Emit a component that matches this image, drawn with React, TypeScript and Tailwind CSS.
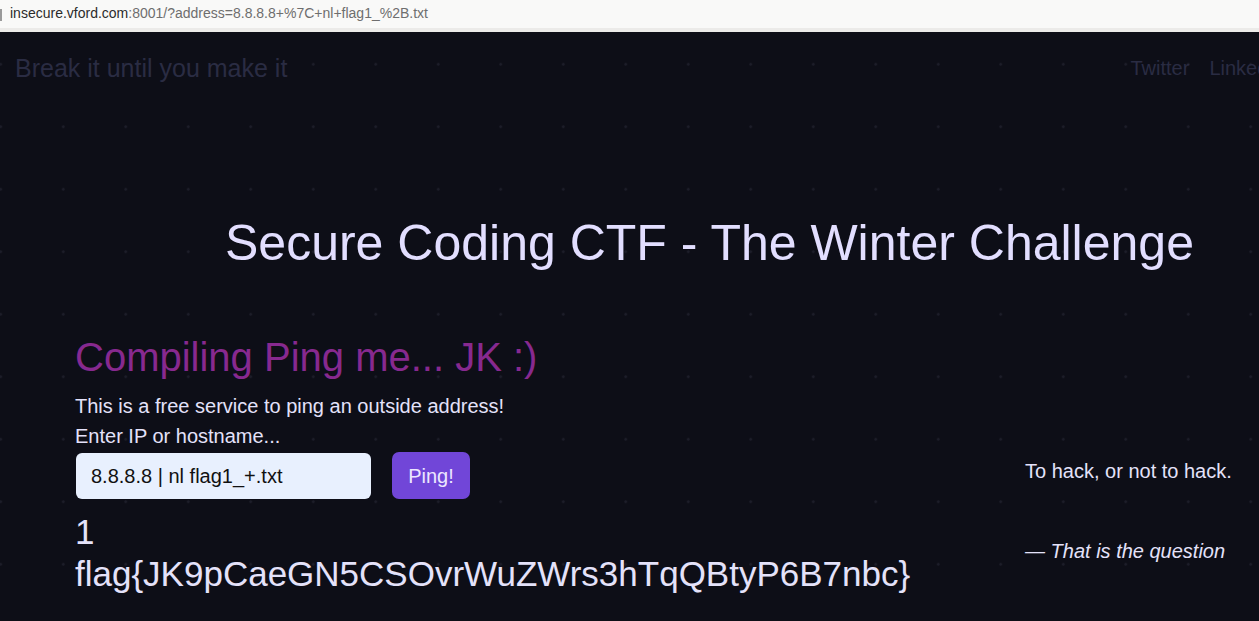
import React from 'react';

const sans = { fontFamily: '"Liberation Sans", Arial, sans-serif' };

export default function App() {
  return (
    <div className="w-[1259px] h-[621px] overflow-hidden flex flex-col bg-[#0d0e17]" style={sans}>
      {/* Browser address bar */}
      <div className="h-[28px] shrink-0 bg-[#f9f9f8] flex items-center relative">
        <div className="absolute left-0 top-[9px] w-[2px] h-[12px] bg-[#9a9a9a]" />
        <div className="pl-[10px] text-[14px] leading-none pb-[2px]">
          <span className="text-[#2b2b2b]">insecure.vford.com</span>
          <span className="text-[#6e6e6e]">:8001/?address=8.8.8.8+%7C+nl+flag1_%2B.txt</span>
        </div>
      </div>
      <div className="h-[4px] shrink-0 bg-[#ecebe9]" />

      {/* Page */}
      <div className="flex-1 flex flex-col bg-[radial-gradient(circle,#1d1e2a_1px,transparent_1.6px)] bg-[size:62.5px_62.5px] bg-[position:-30.5px_1px]">
        <header className="flex items-center justify-between pt-[22px] pl-[15px] leading-[28px] whitespace-nowrap">
          <span className="text-[25px] text-[#2a2c43]">Break it until you make it</span>
          <nav className="flex gap-[20px] text-[20px] text-[#2a2c43] -mr-[26px]">
            <span>Twitter</span>
            <span>LinkedIn</span>
          </nav>
        </header>

        <h1 className="mt-[133px] pl-[225px] text-[50px] leading-[56px] text-[#e2deff] whitespace-nowrap">
          Secure Coding CTF - The Winter Challenge
        </h1>

        <div className="flex mt-[62px] pl-[75px]">
          <div className="flex-1">
            <h2 className="text-[40px] leading-[48px] text-[#87298f]">Compiling Ping me... JK :)</h2>
            <p className="mt-[10px] text-[20px] leading-[30px] text-[#e4e2fa]">This is a free service to ping an outside address!</p>
            <p className="text-[20px] leading-[30px] text-[#e4e2fa]">Enter IP or hostname...</p>
            <div className="flex items-start gap-[21px] mt-[1px] ml-[1px]">
              <div className="mt-[1px] w-[295px] h-[46px] rounded-[6px] bg-[#e8f0fe] flex items-center pl-[15px] text-[20px] text-[#111]">
                8.8.8.8 | nl flag1_+.txt
              </div>
              <button className="w-[78px] h-[47px] rounded-[7px] bg-[#7146d8] text-[20px] text-[#ece6ff]">Ping!</button>
            </div>
            <div className="mt-[12px] text-[35px] leading-[42px] text-[#e4e2fa] whitespace-nowrap">
              <div>1</div>
              <div>flag&#123;JK9pCaeGN5CSOvrWuZWrs3hTqQBtyP6B7nbc&#125;</div>
            </div>
          </div>

          <aside className="w-[234px] shrink-0 mt-[123px] text-[20px] leading-[30px] text-[#e4e2fa]">
            <p>To hack, or not to hack.</p>
            <p className="mt-[50px] italic">— That is the question</p>
          </aside>
        </div>
      </div>
    </div>
  );
}
